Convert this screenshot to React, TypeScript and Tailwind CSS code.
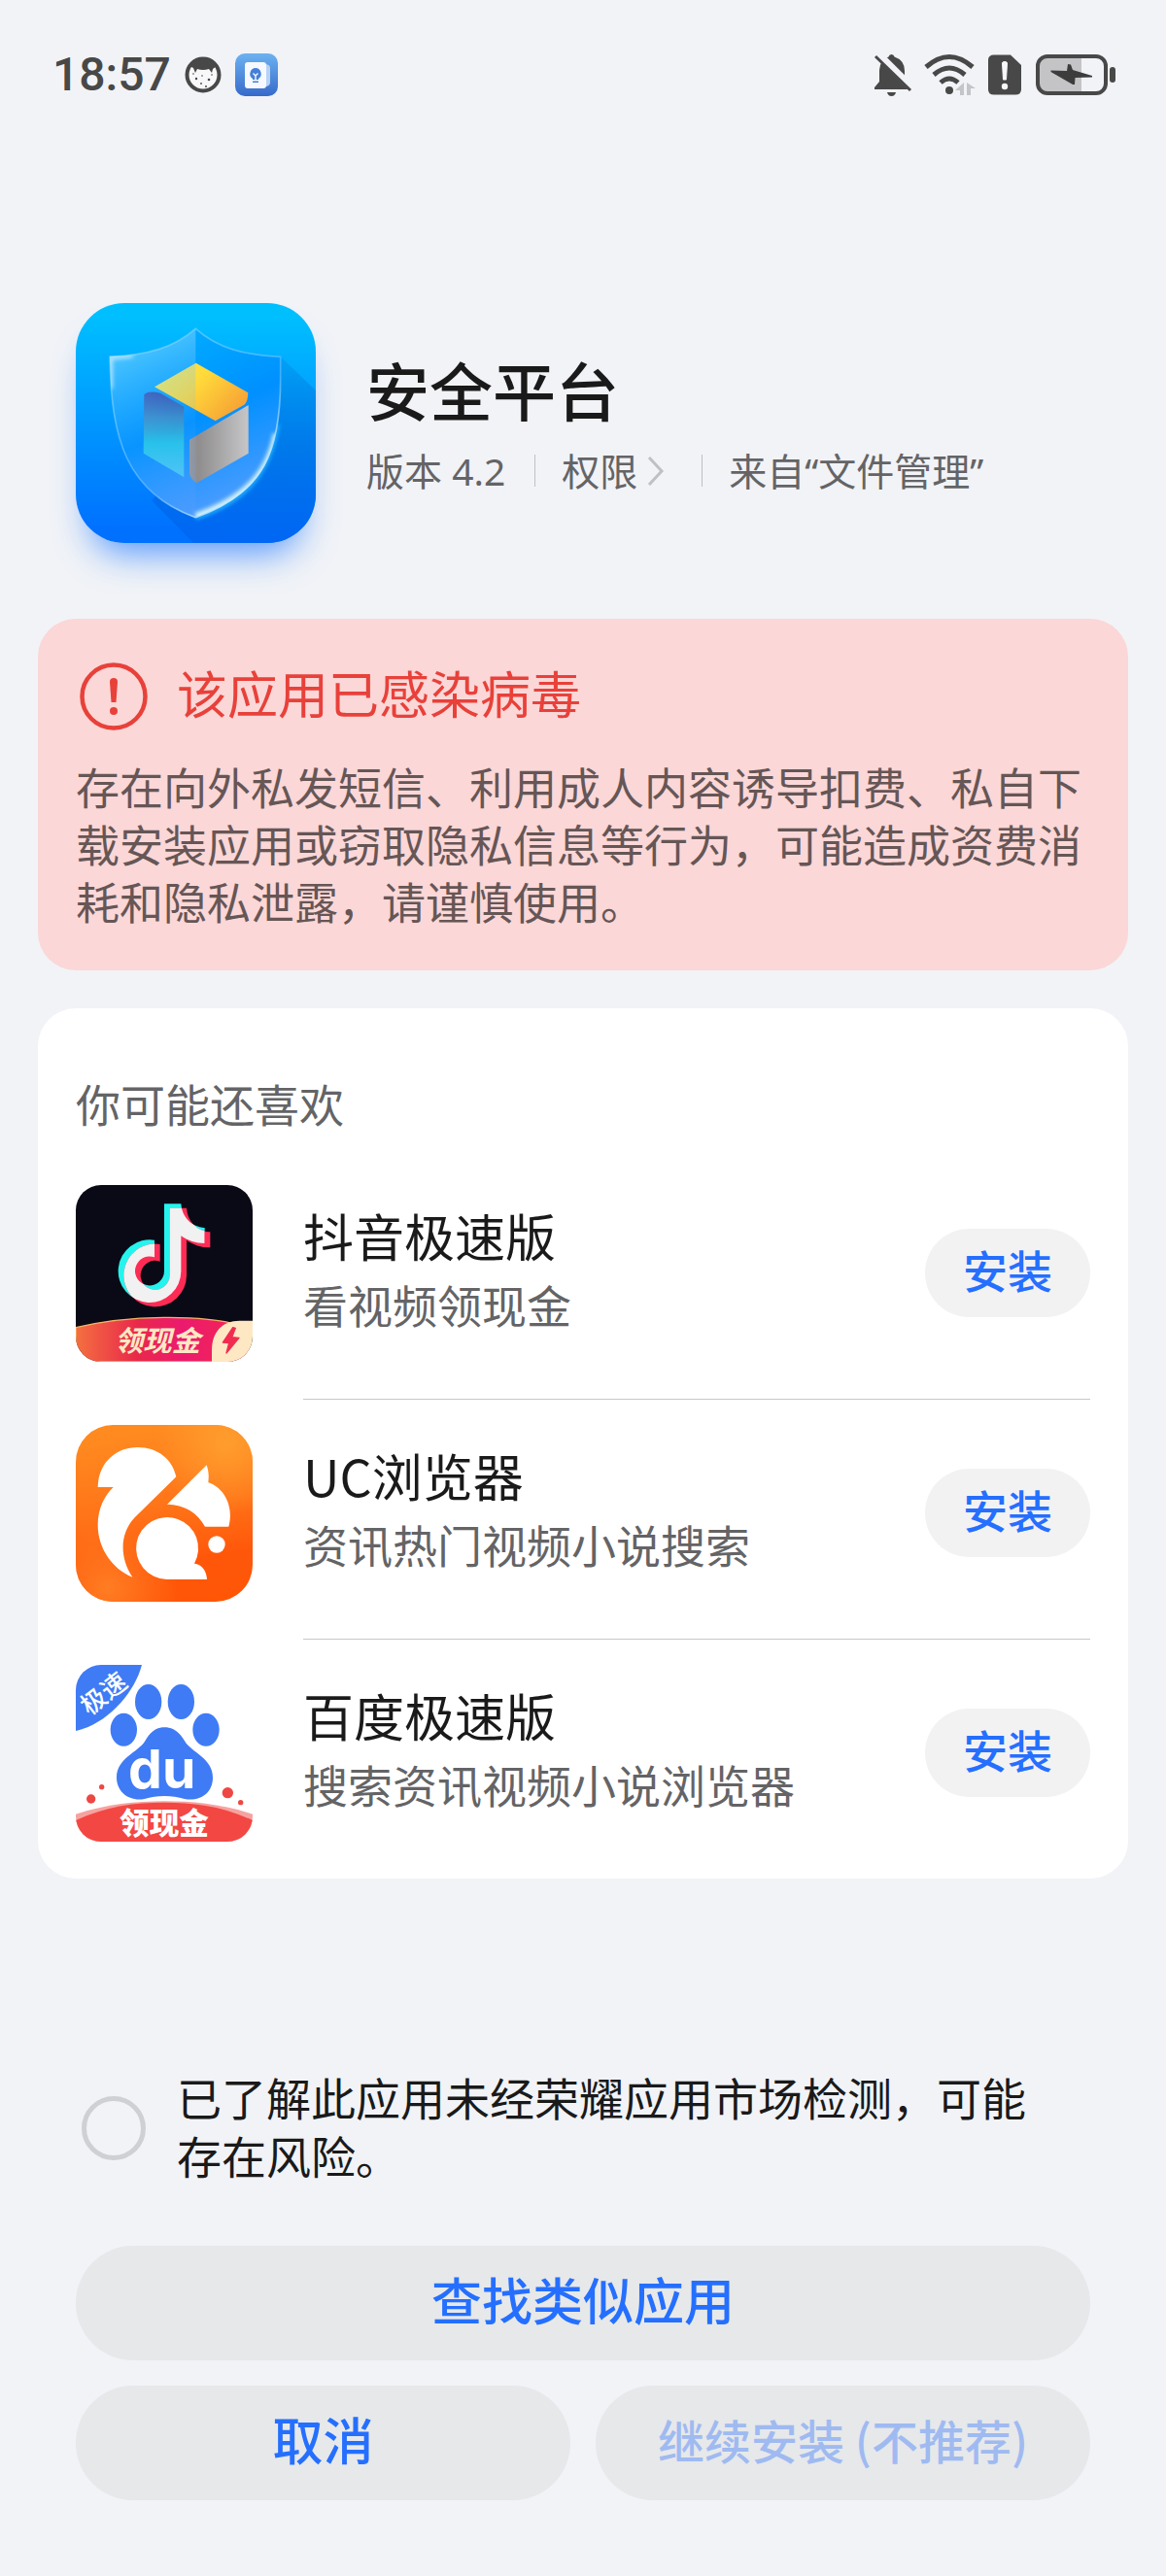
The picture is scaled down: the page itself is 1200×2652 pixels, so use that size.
import {useState, type ReactNode} from "react";

type RecommendedApp = {
    name: string;
    description: string;
    icon: ReactNode;
};

function ShieldIcon() {
    const shield =
        "M454 145 C522 205 600 226 716 232 V300 C716 520 668 652 454 728 C240 652 190 480 190 232 C305 226 385 205 454 145Z";

    return (
        <svg viewBox="84 66 741 741" className="size-full" aria-hidden="true">
            <defs>
                <linearGradient id="shield-bg" x1="0" y1="0" x2="0" y2="1">
                    <stop offset="0.05" stopColor="#00bfff"/>
                    <stop offset="0.95" stopColor="#0070ff"/>
                </linearGradient>
                <linearGradient id="shield-shadow" x1="0.5" y1="0" x2="0.5" y2="1">
                    <stop offset="0" stopColor="#0078d8" stopOpacity="0.25"/>
                    <stop offset="0.45" stopColor="#0070e0" stopOpacity="0.65"/>
                    <stop offset="1" stopColor="#0067f5"/>
                </linearGradient>
                <linearGradient id="shield-body" x1="0.1" y1="0" x2="0.5" y2="1">
                    <stop offset="0" stopColor="#00b4ff"/>
                    <stop offset="0.55" stopColor="#0090ff"/>
                    <stop offset="1" stopColor="#4a9cff"/>
                </linearGradient>
                <linearGradient id="shield-left" x1="0.3" y1="0" x2="0.5" y2="1">
                    <stop offset="0" stopColor="#a0e2ff" stopOpacity="0.95"/>
                    <stop offset="0.6" stopColor="#5cb5ff" stopOpacity="0.15"/>
                    <stop offset="1" stopColor="#5c9cff" stopOpacity="0.4"/>
                </linearGradient>
                <linearGradient id="shield-edge" x1="0" y1="0" x2="0.8" y2="0.9">
                    <stop offset="0" stopColor="#ffffff"/>
                    <stop offset="0.15" stopColor="#9fdcff" stopOpacity="0.5"/>
                    <stop offset="0.7" stopColor="#7fc8ff" stopOpacity="0.5"/>
                    <stop offset="1" stopColor="#c8f0ff"/>
                </linearGradient>
                <linearGradient id="cube-top" x1="0" y1="0" x2="1" y2="0.6">
                    <stop offset="0" stopColor="#fff04a"/>
                    <stop offset="0.5" stopColor="#ffd83a"/>
                    <stop offset="1" stopColor="#f7a535"/>
                </linearGradient>
                <linearGradient id="cube-left" x1="0" y1="0" x2="0" y2="1">
                    <stop offset="0" stopColor="#2a3fa8"/>
                    <stop offset="0.3" stopColor="#3489c8"/>
                    <stop offset="0.6" stopColor="#22c3e8"/>
                    <stop offset="1" stopColor="#4ccaf5"/>
                </linearGradient>
                <linearGradient id="cube-right" x1="0" y1="0" x2="1" y2="0">
                    <stop offset="0" stopColor="#9c9694"/>
                    <stop offset="0.15" stopColor="#8f8d8e"/>
                    <stop offset="1" stopColor="#c6c6c8"/>
                </linearGradient>
                <filter id="shield-glow" x="-20%" y="-20%" width="140%" height="140%">
                    <feGaussianBlur stdDeviation="7"/>
                </filter>
                <clipPath id="shield-clip">
                    <path d={shield}/>
                </clipPath>
            </defs>
            <rect x="84" y="66" width="741" height="741" fill="url(#shield-bg)"/>
            <path d="M716 232 L825 336 V807 H448 L318 676Z" fill="url(#shield-shadow)"/>
            <path d="M454 728 C600 680 680 600 706 440" fill="none" stroke="#25b4ff" strokeWidth="14" filter="url(#shield-glow)"/>
            <path d={shield} fill="url(#shield-body)"/>
            <g clipPath="url(#shield-clip)">
                <path d="M454 728 C590 680 680 610 706 470" fill="none" stroke="#d8f4ff" strokeWidth="26" filter="url(#shield-glow)"/>
                <path d="M192 330 V236 L260 228" fill="none" stroke="#ffffff" strokeWidth="10" filter="url(#shield-glow)"/>
            </g>
            <path d="M295 348 Q310 336 345 344 L418 386 V604 L293 530Z" fill="url(#cube-left)"/>
            <path d="M327 325 L455 251 L616 343 Q616 370 604 380 L515 430Z" fill="url(#cube-top)"/>
            <path d="M435 488 L617 381 V530 L457 622 Q435 606 435 590Z" fill="url(#cube-right)"/>
            <path
                d="M454 145 V728 C240 652 190 480 190 232 C305 226 385 205 454 145Z"
                fill="url(#shield-left)"
                opacity="0.6"
            />
            <path d={shield} fill="none" stroke="url(#shield-edge)" strokeWidth="5"/>
        </svg>
    );
}

function DouyinIcon() {
    const note =
        "M327 118 H379 C382 160 412 190 452 192 V240 C424 240 400 232 379 217 V326 A97 97 0 1 1 297 230 V283 A45 45 0 1 0 327 326Z";

    return (
        <svg viewBox="54 60 546 546" className="size-full rounded-[26px]" aria-hidden="true">
            <defs>
                <linearGradient id="douyin-banner" x1="0" y1="0" x2="1" y2="0">
                    <stop offset="0" stopColor="#f4703f"/>
                    <stop offset="0.35" stopColor="#e9284b"/>
                    <stop offset="0.6" stopColor="#ec1a6e"/>
                    <stop offset="1" stopColor="#f4284f"/>
                </linearGradient>
                <clipPath id="douyin-note">
                    <path d={note}/>
                </clipPath>
            </defs>
            <rect x="54" y="60" width="546" height="546" fill="#0a0a16"/>
            <path d={note} fill="#25f4ee"/>
            <path d={note} fill="#fe2c55" transform="translate(17 13)"/>
            <g clipPath="url(#douyin-note)">
                <path d={note} fill="#f1f1f1" transform="translate(17 13)"/>
            </g>
            <path
                d="M54 500 C220 460 440 460 560 492 L600 606 H54Z"
                fill="url(#douyin-banner)"
                stroke="#f5b468"
                strokeWidth="4"
            />
            <path d="M474 606 V570 C474 515 505 479 560 479 H600 V606Z" fill="#fee8c4"/>
            <path d="M539 500 L508 546 L527 548 L519 579 L558 532 L536 530 L547 502Z" fill="#f22c50" stroke="#f22c50" strokeWidth="4" strokeLinejoin="round"/>
            <text
                x="174"
                y="573"
                fontSize="88"
                fontWeight="700"
                fontStyle="italic"
                fill="#fee8c4"
                className="font-['Noto_Sans_CJK_SC',sans-serif]"
            >
                领现金
            </text>
        </svg>
    );
}

function UcIcon() {
    return (
        <svg viewBox="54 51 546 546" className="size-full rounded-[38px]" aria-hidden="true">
            <defs>
                <linearGradient id="uc-bg" x1="0.6" y1="0" x2="0.75" y2="1">
                    <stop offset="0" stopColor="#ff8a20"/>
                    <stop offset="0.45" stopColor="#ff7318"/>
                    <stop offset="0.75" stopColor="#ff570a"/>
                    <stop offset="1" stopColor="#ff5606"/>
                </linearGradient>
                <radialGradient id="uc-light" cx="0.85" cy="0.1" r="0.4">
                    <stop offset="0" stopColor="#ff9d2e"/>
                    <stop offset="1" stopColor="#ff9d2e" stopOpacity="0"/>
                </radialGradient>
                <radialGradient id="uc-corner" cx="0.18" cy="0.92" r="0.4">
                    <stop offset="0" stopColor="#ff7d22"/>
                    <stop offset="1" stopColor="#ff7d22" stopOpacity="0"/>
                </radialGradient>
            </defs>
            <rect x="54" y="51" width="546" height="546" fill="url(#uc-bg)"/>
            <rect x="54" y="51" width="546" height="546" fill="url(#uc-light)"/>
            <rect x="54" y="51" width="546" height="546" fill="url(#uc-corner)"/>
            <g fill="#ffffff">
                <path d="M122 243 C124 170 175 120 245 120 C305 120 352 155 364 211 L236 337 C190 385 188 460 229 521 C165 495 122 430 122 360 C122 310 142 270 170 243Z"/>
                <path d="M336 296 L458 175 C465 195 465 210 463 229 C508 242 544 300 526 365 H453 C430 322 390 297 336 296Z"/>
                <path d="M335 528 A96 96 0 1 1 420 479 C442 481 458 500 459 528Z"/>
                <circle cx="489" cy="420" r="26"/>
            </g>
        </svg>
    );
}

function BaiduIcon() {
    return (
        <svg viewBox="54 42 546 546" className="size-full rounded-[26px]" aria-hidden="true">
            <rect x="54" y="42" width="546" height="546" fill="#ffffff"/>
            <g fill="#3f7bf5">
                <path d="M54 42 H258 C235 130 150 225 54 246Z"/>
                <ellipse cx="278" cy="156" rx="41" ry="54"/>
                <ellipse cx="379" cy="156" rx="41" ry="54"/>
                <ellipse cx="202" cy="242" rx="41" ry="51"/>
                <ellipse cx="456" cy="242" rx="41" ry="51"/>
                <path d="M328 235 C358 235 375 252 390 277 C410 312 477 330 477 390 C477 440 435 465 390 456 C350 444 305 444 266 456 C220 465 180 435 180 390 C180 330 247 312 268 277 C283 252 298 235 328 235Z"/>
            </g>
            <g fill="#ee4744">
                <circle cx="101" cy="456" r="14"/>
                <circle cx="134" cy="419" r="8"/>
                <circle cx="523" cy="437" r="17"/>
                <circle cx="563" cy="467" r="8"/>
            </g>
            <path d="M54 503 C150 472 240 463 327 463 S505 472 600 503 V588 H54Z" fill="#f6a3a0"/>
            <path d="M54 522 C150 477 240 467 327 467 S505 477 600 522 V588 H54Z" fill="#f34743"/>
            <text
                x="320"
                y="424"
                textAnchor="middle"
                fontSize="166"
                fontWeight="700"
                fill="#ffffff"
                className="font-['Inter',sans-serif]"
            >
                du
            </text>
            <text
                x="327"
                y="563"
                textAnchor="middle"
                fontSize="92"
                fontWeight="900"
                fill="#ffffff"
                className="font-['Noto_Sans_CJK_SC',sans-serif]"
            >
                领现金
            </text>
            <text
                x="140"
                y="158"
                textAnchor="middle"
                fontSize="78"
                fontWeight="500"
                fill="#ffffff"
                transform="rotate(-38 140 130)"
                className="font-['Noto_Sans_CJK_SC',sans-serif]"
            >
                极速
            </text>
        </svg>
    );
}

function StatusBar() {
    return (
        <header className="flex h-[154px] items-center justify-between pr-[52px] pl-[54px] text-[#484848]">
            <div className="flex items-center">
                <time className="font-['Roboto',sans-serif] text-5xl font-medium">18:57</time>
                <svg viewBox="0 0 38 38" className="ml-3.5 size-[38px]" aria-hidden="true">
                    <circle cx="19" cy="19" r="16.5" fill="#f8f8fa" stroke="currentColor" strokeWidth="4"/>
                    <path d="M5 10 Q19 -3 33 10 L29 13 L28 17 L25 13 Q19 15 13 13 L11 17 L9 12Z" fill="currentColor"/>
                    <g fill="currentColor">
                        <circle cx="12" cy="23" r="1.2"/>
                        <circle cx="18" cy="20" r="0.8"/>
                        <circle cx="25" cy="24" r="1.3"/>
                        <circle cx="17" cy="28" r="0.9"/>
                        <circle cx="22" cy="31" r="1"/>
                        <circle cx="28" cy="19" r="0.8"/>
                        <circle cx="9" cy="18" r="0.8"/>
                    </g>
                </svg>
                <svg viewBox="0 0 44 44" className="ml-3.5 size-11" aria-hidden="true">
                    <defs>
                        <linearGradient id="tips-bg" x1="0" y1="0" x2="0" y2="1">
                            <stop offset="0" stopColor="#6cb2f0"/>
                            <stop offset="1" stopColor="#376acb"/>
                        </linearGradient>
                    </defs>
                    <rect width="44" height="44" rx="10" fill="url(#tips-bg)"/>
                    <path d="M32 11 Q36 12 36 15 V30 Q36 33 32 34Z" fill="#b8d2f5"/>
                    <rect x="10" y="9" width="22" height="27" rx="3" fill="#f6f9ff"/>
                    <path d="M21 15 A6 6 0 0 0 18 26 V27 H24 V26 A6 6 0 0 0 21 15Z M18 28.5 H24 V30 H18Z" fill="#4580d8"/>
                    <path d="M18.5 20.5 L21 23 L23.5 20.5 M21 23 V27" fill="none" stroke="#f6f9ff" strokeWidth="1.4"/>
                </svg>
            </div>

            <div className="flex items-center">
                <svg viewBox="0 0 40 46" className="h-[46px] w-10" aria-hidden="true">
                    <path d="M18.5 2 Q21 2 21.5 4.5 Q32 8 32 19 V30 L35 36 V38 H1 V36 L6 30 V18 Q7 7 15.5 4.5 Q16 2 18.5 2Z" fill="currentColor"/>
                    <path d="M14 41 H23 Q22 45 18.5 45 Q15 45 14 41Z" fill="currentColor"/>
                    <path d="M4 1 L41 38" stroke="#f1f3f7" strokeWidth="8"/>
                    <path d="M2 4 L38 39" stroke="currentColor" strokeWidth="3"/>
                </svg>
                <svg viewBox="0 0 54 44" className="ml-3 h-11 w-[54px]" aria-hidden="true">
                    <g fill="none" stroke="currentColor" strokeWidth="5">
                        <path d="M2 14 Q26 -7 50 14"/>
                        <path d="M10 22 Q26 8 42 22"/>
                        <path d="M17 30 Q26 22 35 30"/>
                    </g>
                    <circle cx="26" cy="38" r="4" fill="currentColor"/>
                    <path d="M41 30 V43 H37 V38 H32Z M44 30 L53 36 H48 V43 H44Z" fill="#c4c5c8"/>
                </svg>
                <svg viewBox="0 0 34 42" className="ml-3 h-[42px] w-[34px]" aria-hidden="true">
                    <path d="M6 0.5 H23 L34 11 V36 Q34 41.5 28 41.5 H6 Q0 41.5 0 36 V6 Q0 0.5 6 0.5Z" fill="currentColor"/>
                    <path d="M14.5 9 Q14.5 7.5 17 7.5 Q19.5 7.500 19.5 9 L18.5 26 H15.5Z" fill="#f8f8fa" stroke="#f8f8fa" strokeLinejoin="round"/>
                    <circle cx="17" cy="33" r="3.2" fill="#f8f8fa"/>
                </svg>
                <svg viewBox="0 0 82 42" className="ml-[15px] h-[42px] w-[82px]" aria-hidden="true">
                    <path d="M12 3 H47 V39 H12 Q3 39 3 30 V12 Q3 3 12 3Z" fill="#c4c4c6"/>
                    <rect x="2" y="2" width="70" height="38" rx="10" fill="none" stroke="currentColor" strokeWidth="4"/>
                    <rect x="76" y="13" width="6" height="16" rx="3" fill="currentColor"/>
                    <path d="M15.5 18 V16.5 L32 17 L33 10 L36 10.500 L38 16 L58 22 V23.5 L40.5 24 L40 31 H38Z" fill="#3c3c3c"/>
                </svg>
            </div>
        </header>
    );
}

const recommendedApps: RecommendedApp[] = [
    {name: "抖音极速版", description: "看视频领现金", icon: <DouyinIcon/>},
    {name: "UC浏览器", description: "资讯热门视频小说搜索", icon: <UcIcon/>},
    {name: "百度极速版", description: "搜索资讯视频小说浏览器", icon: <BaiduIcon/>}
];

export default function App() {
    const [accepted, setAccepted] = useState(false);

    return (
        <div className="flex min-h-screen flex-col bg-[#f1f3f7] font-['Noto_Sans_CJK_SC',sans-serif] text-[#1a1a1a]">
            <StatusBar/>

            <main className="px-[39px] pt-[158px]">
                <section className="flex items-center gap-[52px] px-[39px]">
                    <div className="size-[247px] shrink-0 overflow-hidden rounded-[50px] shadow-[0_26px_36px_-16px_rgba(30,120,255,0.75)]">
                        <ShieldIcon/>
                    </div>
                    <div className="min-w-0">
                        <h1 className="text-[65px] leading-[98px] font-medium">安全平台</h1>
                        {/* Noto Sans comes first so the quotation marks stay half width */}
                        <div className="flex items-center font-['Noto_Sans','Noto_Sans_CJK_SC',sans-serif] text-[39px] leading-[71px] text-[#646466]">
                            <span>版本 4.2</span>
                            <span className="mr-[27px] ml-[30px] h-[33px] w-px bg-[#bfc0c3]"/>
                            <button type="button" className="flex items-center gap-2.5">
                                权限
                                <svg viewBox="0 0 18 32" className="h-8 w-[18px]" aria-hidden="true">
                                    <path d="M2 2 L15 16 L2 30" fill="none" stroke="#bfc0c3" strokeWidth="3"/>
                                </svg>
                            </button>
                            <span className="mr-[27px] ml-[38px] h-[33px] w-px bg-[#bfc0c3]"/>
                            <span>来自“文件管理”</span>
                        </div>
                    </div>
                </section>

                <section className="mt-[78px] rounded-[39px] bg-[#fbd7d7] px-[39px] pt-[45px] pb-[42px]">
                    <div className="flex items-center gap-[30px] pl-1">
                        <svg viewBox="0 0 70 70" className="size-[70px] shrink-0" aria-hidden="true">
                            <circle cx="35" cy="35" r="32.5" fill="none" stroke="#e8413a" strokeWidth="4.5"/>
                            <path d="M31 20 Q31 16 35 16 Q39 16 39 20 L37.5 41 H32.5Z" fill="#e8413a"/>
                            <circle cx="35" cy="50" r="4" fill="#e8413a"/>
                        </svg>
                        <h2 className="pb-2 text-[52px] leading-[62px] text-[#e8413a]">该应用已感染病毒</h2>
                    </div>
                    <p className="mt-7 text-[45px] leading-[59px] text-[#665656]">
                        存在向外私发短信、利用成人内容诱导扣费、私自下载安装应用或窃取隐私信息等行为，可能造成资费消耗和隐私泄露，请谨慎使用。
                    </p>
                </section>

                <section className="mt-[39px] rounded-[39px] bg-white px-[39px] pt-[67px]">
                    <h2 className="text-[46px] leading-[60px] text-[#646466]">你可能还喜欢</h2>
                    <ul className="mt-[55px]">
                        {recommendedApps.map((app) => (
                            <li key={app.name} className="group flex gap-[52px]">
                                <div className="size-[182px] shrink-0">{app.icon}</div>
                                <div className="mb-[26px] flex-1 border-b border-[#c8c8ca] pb-10 group-last:mb-0 group-last:border-b-0">
                                    <div className="flex h-[180px] items-center justify-between">
                                        <div>
                                            <h3 className="text-[52px] leading-[65px]">{app.name}</h3>
                                            <p className="text-[46px] leading-[77px] text-[#646466]">{app.description}</p>
                                        </div>
                                        <button
                                            type="button"
                                            aria-label={`安装${app.name}`}
                                            className="h-[91px] w-[170px] shrink-0 rounded-full bg-[#f2f2f3] pb-2 text-[46px] font-medium text-[#256fff]"
                                        >
                                            安装
                                        </button>
                                    </div>
                                </div>
                            </li>
                        ))}
                    </ul>
                </section>
            </main>

            <footer className="mt-auto px-[78px] pb-[78px]">
                <label className="flex items-center gap-8 pr-9 pl-1.5">
                    <input
                        type="checkbox"
                        checked={accepted}
                        onChange={(event) => setAccepted(event.target.checked)}
                        className="size-[66px] shrink-0 appearance-none rounded-full border-[5px] border-[#cfd0d3] checked:border-[#256fff] checked:bg-[#256fff]"
                    />
                    <span className="pb-1.5 text-[46px] leading-[60px]">已了解此应用未经荣耀应用市场检测，可能存在风险。</span>
                </label>
                <div className="mt-[58px] grid grid-cols-2 gap-[26px]">
                    <button
                        type="button"
                        className="col-span-2 h-[118px] rounded-full bg-[#e6e8ea] pb-2 text-[52px] font-medium text-[#256fff]"
                    >
                        查找类似应用
                    </button>
                    <button
                        type="button"
                        className="h-[118px] rounded-full bg-[#e6e8ea] pb-2 text-[52px] font-medium text-[#256fff]"
                    >
                        取消
                    </button>
                    <button
                        type="button"
                        disabled={!accepted}
                        className="h-[118px] rounded-full bg-[#e6e8ea] pb-2 text-5xl font-medium text-[#256fff] disabled:text-[#9fbaf1]"
                    >
                        继续安装 (不推荐)
                    </button>
                </div>
            </footer>
        </div>
    );
}
